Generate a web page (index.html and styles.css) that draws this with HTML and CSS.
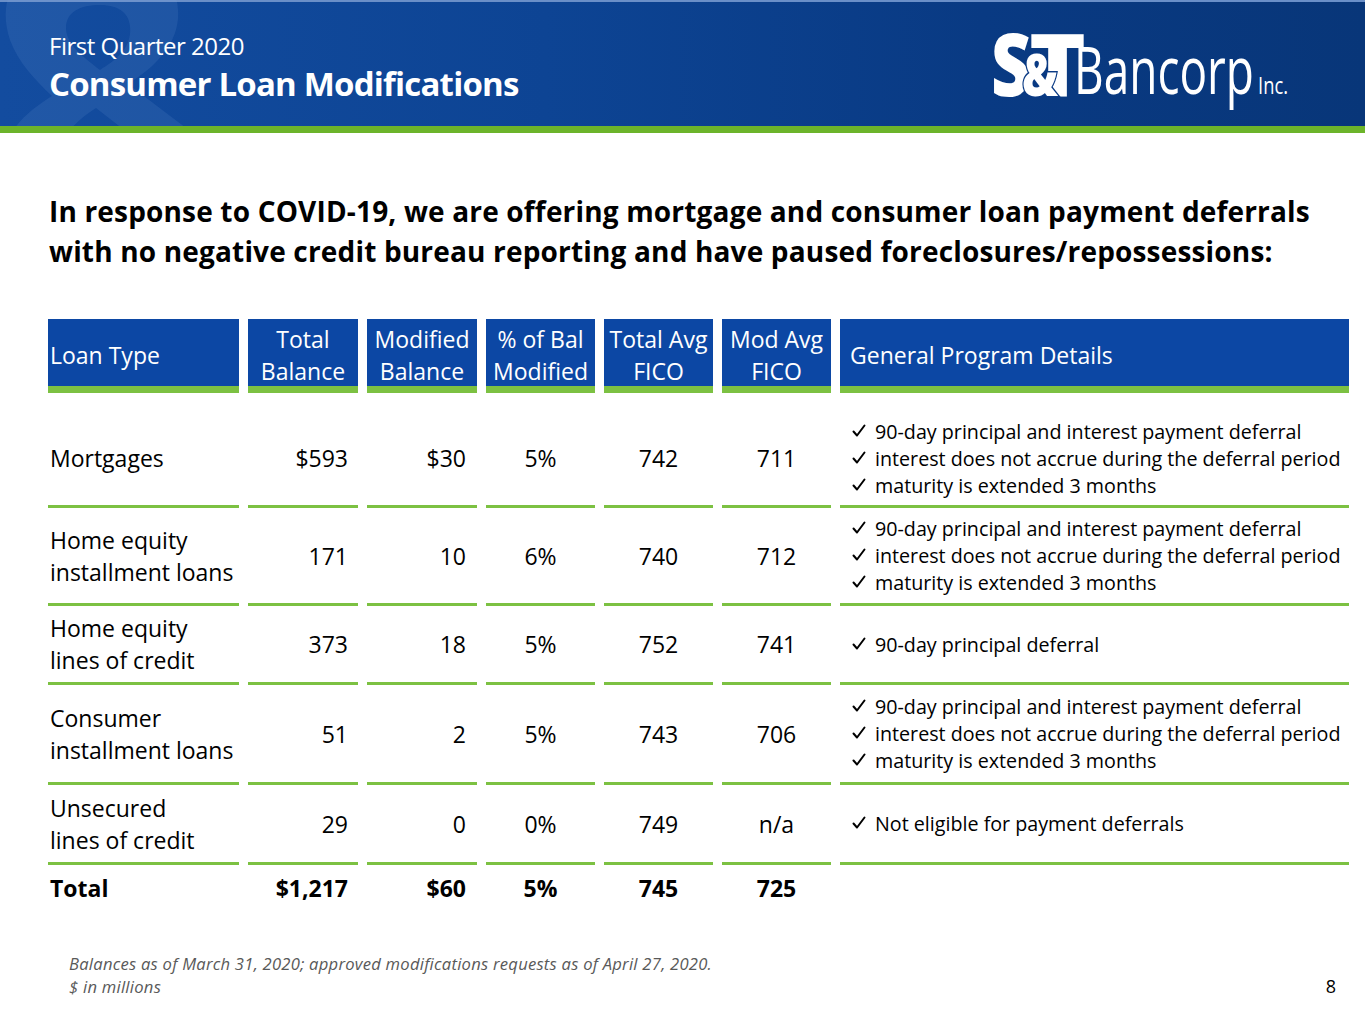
FILE: index.html
```html
<!DOCTYPE html>
<html lang="en">
<head>
<meta charset="utf-8">
<title>Consumer Loan Modifications</title>
<link rel="stylesheet" href="styles.css">
</head>
<body>
<div class="slide">
  <header class="banner">
    <svg class="watermark" width="260" height="126" viewBox="0 0 260 126" aria-hidden="true">
      <path d="M70 -40 C20 -40 -5 -5 10 40 C18 62 35 80 52 96 C30 110 10 126 5 150 L60 150 C64 132 80 118 96 108 L150 150 L215 150 L128 84 C160 64 180 40 178 10 C176 -28 140 -40 110 -40 Z M100 5 C122 5 132 16 130 34 C128 50 116 60 100 70 C82 56 66 44 66 28 C66 12 80 5 100 5 Z"/>
    </svg>
    <div class="titles">
      <div class="kicker">First Quarter 2020</div>
      <h1 class="title">Consumer Loan Modifications</h1>
    </div>
    <svg class="logo" width="310" height="122" viewBox="0 0 310 122" aria-label="S&amp;T Bancorp Inc.">
      <text x="6" y="92" class="lg-heavy" font-size="86" textLength="40" lengthAdjust="spacingAndGlyphs">S</text>
      <text x="44" y="92" class="lg-heavy" font-size="86" textLength="57" lengthAdjust="spacingAndGlyphs">T</text>
      <text x="37" y="92" class="lg-amp" font-size="58" textLength="36" lengthAdjust="spacingAndGlyphs">&amp;</text>
      <text x="89" y="90" class="lg-reg" font-size="66" textLength="180" lengthAdjust="spacingAndGlyphs">Bancorp</text>
      <text x="273" y="90" class="lg-reg" font-size="23" textLength="30" lengthAdjust="spacingAndGlyphs">Inc.</text>
    </svg>
  </header>
  <div class="rule"></div>

  <section class="content">
    <h2 class="lead">In response to COVID-19, we are offering mortgage and consumer loan payment deferrals<br>with no negative credit bureau reporting and have paused foreclosures/repossessions:</h2>

    <div class="table">
      <div class="th left">Loan Type</div>
      <div class="th">Total<br>Balance</div>
      <div class="th">Modified<br>Balance</div>
      <div class="th">% of Bal<br>Modified</div>
      <div class="th">Total Avg<br>FICO</div>
      <div class="th">Mod Avg<br>FICO</div>
      <div class="th left details-h">General Program Details</div>

      <div class="td name first">Mortgages</div>
      <div class="td num1 first">$593</div>
      <div class="td num2 first">$30</div>
      <div class="td ctr first">5%</div>
      <div class="td ctr first">742</div>
      <div class="td ctr first">711</div>
      <div class="td details first">
        <ul class="checks">
          <li><svg class="ck" viewBox="0 0 14 14"><path d="M1.5 7.5 L5 11.5 L12.5 1.5"/></svg><span>90-day principal and interest payment deferral</span></li>
          <li><svg class="ck" viewBox="0 0 14 14"><path d="M1.5 7.5 L5 11.5 L12.5 1.5"/></svg><span>interest does not accrue during the deferral period</span></li>
          <li><svg class="ck" viewBox="0 0 14 14"><path d="M1.5 7.5 L5 11.5 L12.5 1.5"/></svg><span>maturity is extended 3 months</span></li>
        </ul>
      </div>

      <div class="td name">Home equity<br>installment loans</div>
      <div class="td num1">171</div>
      <div class="td num2">10</div>
      <div class="td ctr">6%</div>
      <div class="td ctr">740</div>
      <div class="td ctr">712</div>
      <div class="td details">
        <ul class="checks">
          <li><svg class="ck" viewBox="0 0 14 14"><path d="M1.5 7.5 L5 11.5 L12.5 1.5"/></svg><span>90-day principal and interest payment deferral</span></li>
          <li><svg class="ck" viewBox="0 0 14 14"><path d="M1.5 7.5 L5 11.5 L12.5 1.5"/></svg><span>interest does not accrue during the deferral period</span></li>
          <li><svg class="ck" viewBox="0 0 14 14"><path d="M1.5 7.5 L5 11.5 L12.5 1.5"/></svg><span>maturity is extended 3 months</span></li>
        </ul>
      </div>

      <div class="td name">Home equity<br>lines of credit</div>
      <div class="td num1">373</div>
      <div class="td num2">18</div>
      <div class="td ctr">5%</div>
      <div class="td ctr">752</div>
      <div class="td ctr">741</div>
      <div class="td details">
        <ul class="checks">
          <li><svg class="ck" viewBox="0 0 14 14"><path d="M1.5 7.5 L5 11.5 L12.5 1.5"/></svg><span>90-day principal deferral</span></li>
        </ul>
      </div>

      <div class="td name">Consumer<br>installment loans</div>
      <div class="td num1">51</div>
      <div class="td num2">2</div>
      <div class="td ctr">5%</div>
      <div class="td ctr">743</div>
      <div class="td ctr">706</div>
      <div class="td details">
        <ul class="checks">
          <li><svg class="ck" viewBox="0 0 14 14"><path d="M1.5 7.5 L5 11.5 L12.5 1.5"/></svg><span>90-day principal and interest payment deferral</span></li>
          <li><svg class="ck" viewBox="0 0 14 14"><path d="M1.5 7.5 L5 11.5 L12.5 1.5"/></svg><span>interest does not accrue during the deferral period</span></li>
          <li><svg class="ck" viewBox="0 0 14 14"><path d="M1.5 7.5 L5 11.5 L12.5 1.5"/></svg><span>maturity is extended 3 months</span></li>
        </ul>
      </div>

      <div class="td name">Unsecured<br>lines of credit</div>
      <div class="td num1">29</div>
      <div class="td num2">0</div>
      <div class="td ctr">0%</div>
      <div class="td ctr">749</div>
      <div class="td ctr">n/a</div>
      <div class="td details">
        <ul class="checks">
          <li><svg class="ck" viewBox="0 0 14 14"><path d="M1.5 7.5 L5 11.5 L12.5 1.5"/></svg><span>Not eligible for payment deferrals</span></li>
        </ul>
      </div>

      <div class="tt name">Total</div>
      <div class="tt num1">$1,217</div>
      <div class="tt num2">$60</div>
      <div class="tt ctr">5%</div>
      <div class="tt ctr">745</div>
      <div class="tt ctr">725</div>
      <div class="tt"></div>
    </div>
  </section>

  <footer class="foot">
    <div class="note">Balances as of March 31, 2020; approved modifications requests as of April 27, 2020.<br>$ in millions</div>
    <div class="pgnum">8</div>
  </footer>
</div>
</body>
</html>
```

FILE: styles.css
```css
* { box-sizing: border-box; }
html, body { margin: 0; padding: 0; background: #ffffff; }
body { font-family: "Open Sans", "Liberation Sans", sans-serif; color: #000; }

.slide { width: 1365px; height: 1024px; position: relative; overflow: hidden; background: #fff; }

/* ---------- banner ---------- */
.banner {
  position: relative;
  height: 126px;
  display: flex;
  justify-content: space-between;
  align-items: flex-start;
  overflow: hidden;
  background: linear-gradient(90deg, #134c9f 0%, #0d4494 40%, #093a83 72%, #083679 100%);
  box-shadow: inset 0 2px 0 #6a8fc8;
}
.watermark {
  position: absolute;
  left: 0;
  top: 0;
  pointer-events: none;
}
.watermark path { fill: rgba(130, 170, 225, 0.13); fill-rule: evenodd; }
.titles { position: relative; padding: 32px 0 0 49px; color: #fff; }
.kicker { font-size: 24px; line-height: 28px; letter-spacing: -0.5px; }
.title { margin: 4px 0 0; font-size: 33px; line-height: 40px; font-weight: 700; letter-spacing: -0.8px; }
.logo { position: relative; margin: 4px 70px 0 0; flex: none; }
.lg-heavy { font-family: "Open Sans", sans-serif; font-weight: 800; fill: #fff; }
.lg-amp { font-family: "Open Sans", sans-serif; font-weight: 800; fill: #fff; stroke: #0a3a84; stroke-width: 3; paint-order: stroke; }
.lg-reg { font-family: "Open Sans", sans-serif; font-weight: 400; fill: #fff; }
.rule { height: 7px; background: #6cb42a; }

/* ---------- content ---------- */
.content { padding: 58px 0 0 48px; }
.lead {
  margin: 0 0 0 1px;
  font-size: 28px;
  line-height: 40px;
  font-weight: 700;
  letter-spacing: 0.17px;
  color: #000;
}

.table {
  margin-top: 48px;
  display: grid;
  grid-template-columns: 191px 110px 110px 109px 109px 109px 509px;
  grid-template-rows: 74px 115px 98px 79px 100px 80px 50px;
  column-gap: 9px;
  font-size: 23px;
  line-height: 32px;
}
.th {
  background: #0c47a4;
  border-bottom: 7px solid #7cc142;
  color: #fff;
  display: flex;
  align-items: center;
  justify-content: center;
  text-align: center;
  padding-top: 4px;
}
.th.left { justify-content: flex-start; text-align: left; padding-left: 2px; }
.th.details-h { padding-left: 10px; }

.td {
  border-bottom: 3px solid #7cc142;
  display: flex;
  align-items: center;
}
.td.first { padding-top: 18px; }
.tt { display: flex; align-items: center; font-weight: 700; padding-bottom: 4px; }

.name { padding-left: 2px; }
.num1 { justify-content: flex-end; padding-right: 10px; }
.num2 { justify-content: flex-end; padding-right: 11px; }
.ctr { justify-content: center; }

.details { padding-left: 12px; }
.checks { list-style: none; margin: 0; padding: 0; font-size: 19.7px; line-height: 27px; }
.checks li { display: flex; align-items: flex-start; white-space: nowrap; }
.ck { width: 14px; height: 14px; margin: 6px 9px 0 0; flex: none; }
.ck path { fill: none; stroke: #000; stroke-width: 2; stroke-linecap: round; stroke-linejoin: round; }

/* ---------- footer ---------- */
.foot {
  margin-top: 37px;
  display: flex;
  justify-content: space-between;
  align-items: flex-end;
  padding: 0 29px 0 69px;
}
.note { font-size: 16.6px; line-height: 23px; font-style: italic; color: #595959; letter-spacing: 0.25px; }
.pgnum { font-size: 18px; line-height: 23px; color: #000; }
```
